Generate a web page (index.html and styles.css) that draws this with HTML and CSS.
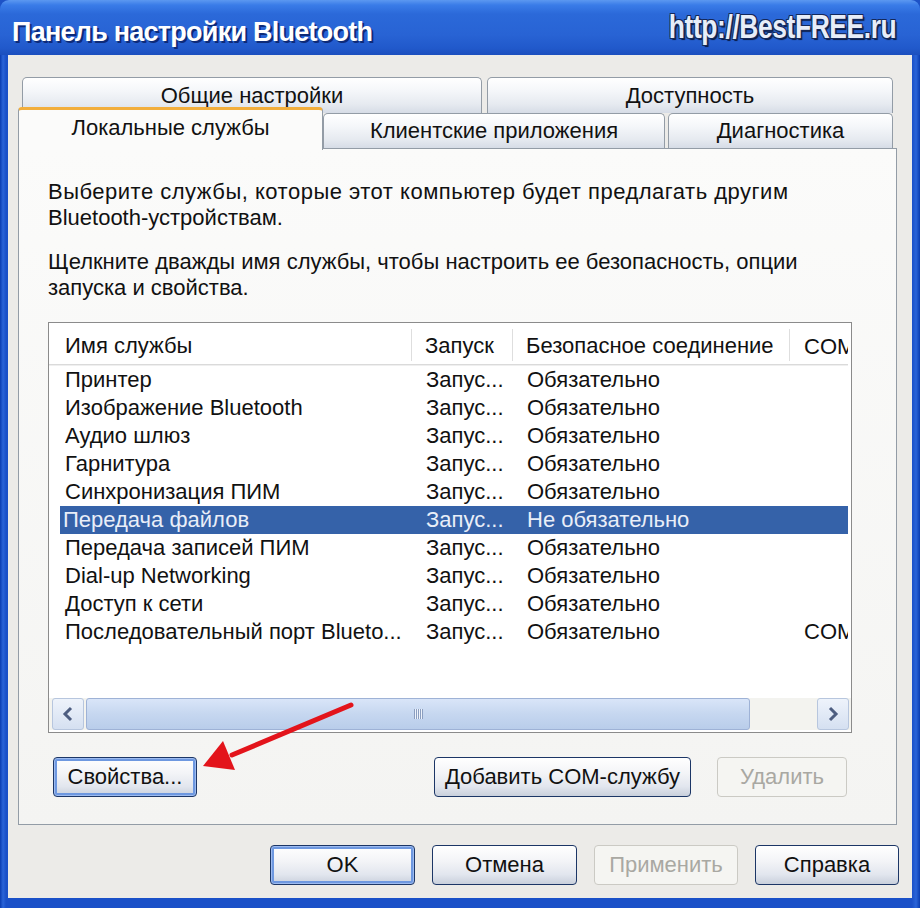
FILE: index.html
```html
<!DOCTYPE html>
<html lang="ru">
<head>
<meta charset="utf-8">
<title>Панель настройки Bluetooth</title>
<link rel="stylesheet" href="styles.css">
</head>
<body>
<div class="window">
  <div class="titlebar">
    <span class="title">Панель настройки Bluetooth</span>
    <span class="watermark">http://BestFREE.ru</span>
  </div>
  <div class="body">
    <div class="tabs row1">
      <div class="tab t-general">Общие настройки</div>
      <div class="tab t-access">Доступность</div>
    </div>
    <div class="tabs row2">
      <div class="tab active t-local">Локальные службы</div>
      <div class="tab t-client">Клиентские приложения</div>
      <div class="tab t-diag">Диагностика</div>
    </div>
    <div class="panel">
      <p class="para"><span class="wide">Выберите службы, которые этот компьютер будет предлагать другим</span><br>Bluetooth-устройствам.</p>
      <p class="para para2">Щелкните дважды имя службы, чтобы настроить ее безопасность, опции<br>запуска и свойства.</p>
      <div class="list">
        <div class="lv-head">
          <div class="hc c1">Имя службы</div>
          <div class="hc c2">Запуск</div>
          <div class="hc c3">Безопасное соединение</div>
          <div class="hc c4">COM</div>
        </div>
        <div class="lv-rows">
          <div class="lv-row"><span class="rc r1">Принтер</span><span class="rc r2">Запус...</span><span class="rc r3">Обязательно</span><span class="rc r4"></span></div>
          <div class="lv-row"><span class="rc r1">Изображение Bluetooth</span><span class="rc r2">Запус...</span><span class="rc r3">Обязательно</span><span class="rc r4"></span></div>
          <div class="lv-row"><span class="rc r1">Аудио шлюз</span><span class="rc r2">Запус...</span><span class="rc r3">Обязательно</span><span class="rc r4"></span></div>
          <div class="lv-row"><span class="rc r1">Гарнитура</span><span class="rc r2">Запус...</span><span class="rc r3">Обязательно</span><span class="rc r4"></span></div>
          <div class="lv-row"><span class="rc r1">Синхронизация ПИМ</span><span class="rc r2">Запус...</span><span class="rc r3">Обязательно</span><span class="rc r4"></span></div>
          <div class="lv-row selected"><span class="rc r1">Передача файлов</span><span class="rc r2">Запус...</span><span class="rc r3">Не обязательно</span><span class="rc r4"></span></div>
          <div class="lv-row"><span class="rc r1">Передача записей ПИМ</span><span class="rc r2">Запус...</span><span class="rc r3">Обязательно</span><span class="rc r4"></span></div>
          <div class="lv-row"><span class="rc r1">Dial-up Networking</span><span class="rc r2">Запус...</span><span class="rc r3">Обязательно</span><span class="rc r4"></span></div>
          <div class="lv-row"><span class="rc r1">Доступ к сети</span><span class="rc r2">Запус...</span><span class="rc r3">Обязательно</span><span class="rc r4"></span></div>
          <div class="lv-row"><span class="rc r1">Последовательный порт Blueto...</span><span class="rc r2">Запус...</span><span class="rc r3">Обязательно</span><span class="rc r4">COM</span></div>
        </div>
        <div class="hscroll">
          <div class="sbtn"><svg width="14" height="16" viewBox="0 0 14 16"><polyline points="10,2 4,8 10,14" fill="none" stroke="#4d5d80" stroke-width="3"/></svg></div>
          <div class="track">
            <div class="thumb"><span class="grip"></span></div>
          </div>
          <div class="sbtn"><svg width="14" height="16" viewBox="0 0 14 16"><polyline points="4,2 10,8 4,14" fill="none" stroke="#4d5d80" stroke-width="3"/></svg></div>
        </div>
      </div>
      <div class="btnrow">
        <button class="btn default w-props">Свойства...</button>
        <button class="btn w-add">Добавить COM-службу</button>
        <button class="btn disabled w-del">Удалить</button>
      </div>
    </div>
    <div class="footer">
      <button class="btn default w-ok">OK</button>
      <button class="btn w-cancel">Отмена</button>
      <button class="btn disabled w-apply">Применить</button>
      <button class="btn w-help">Справка</button>
    </div>
  </div>
  <svg class="arrow" width="920" height="908" viewBox="0 0 920 908">
    <line x1="351" y1="705" x2="232" y2="755" stroke="#e3141b" stroke-width="5" stroke-linecap="round"/>
    <polygon points="203,766 223,741 235,770" fill="#e3141b"/>
  </svg>
</div>
</body>
</html>
```
FILE: styles.css
```css
* { box-sizing: border-box; }
html, body { margin: 0; padding: 0; }
body {
  width: 920px;
  height: 908px;
  overflow: hidden;
  font-family: "Liberation Sans", Arial, sans-serif;
  font-size: 22px;
  color: #111;
  background: #1d52c6;
}
.window {
  position: relative;
  width: 920px;
  height: 908px;
  display: flex;
  flex-direction: column;
  border-radius: 9px 9px 0 0;
  overflow: hidden;
  background: linear-gradient(90deg, #0a3cb0 0, #2a64d8 3px, #1a50c8 6px, #1a50c8 912px, #2a64d8 916px, #0a3cb0 920px);
}
.titlebar {
  flex: none;
  height: 55px;
  display: flex;
  justify-content: space-between;
  align-items: flex-start;
  padding: 10px 24px 0 12px;
  background: linear-gradient(#5c98f0 0, #3a7ce8 5px, #2b69d9 14px, #2863d4 35px, #2159cb 48px, #1b4fbe 55px);
}
.title {
  color: #fff;
  font-weight: bold;
  font-size: 27px;
  letter-spacing: -0.75px;
  line-height: 44px;
  text-shadow: 2px 2px 0 #0d2a78;
}
.watermark {
  font-weight: bold;
  font-size: 33px;
  line-height: 1;
  color: #e7edf8;
  transform: scaleX(0.8);
  transform-origin: right center;
  letter-spacing: -0.5px;
  text-shadow: 1px 1px 0 #14285a, -1px -1px 0 #14285a, 1px -1px 0 #14285a, -1px 1px 0 #14285a, 2px 2px 1px #0b1a40;
}
.body {
  flex: 1;
  margin: 0 8px 10px 8px;
  background: #ecebe8;
  padding: 22px 13px 0 10px;
  display: flex;
  flex-direction: column;
}
.tabs { display: flex; }
.row1 { margin-left: 4px; height: 36px; gap: 5px; }
.row2 { height: 35px; align-items: flex-end; }
.tab {
  flex: none;
  display: flex;
  align-items: center;
  justify-content: center;
  border: 1px solid #939ca6;
  border-bottom: none;
  border-radius: 5px 5px 0 0;
  background: linear-gradient(#ffffff 0, #f5f7fa 35%, #e6eaf0 75%, #d6dce6 100%);
  white-space: nowrap;
}
.row1 .tab { height: 36px; }
.row2 .tab { height: 35px; }
.t-general { width: 460px; }
.t-access { width: 406px; }
.t-local { width: 305px; }
.t-client { width: 342px; }
.t-diag { width: 225px; margin-left: 3px; }
.tab.active {
  position: relative;
  z-index: 1;
  height: 43px;
  margin-bottom: -2px;
  margin-top: -8px;
  border-top: 3px solid #f2ae3c;
  border-radius: 4px 4px 0 0;
  background: #fbfbfa;
  padding-bottom: 4px;
}
.panel {
  width: 879px;
  height: 677px;
  border: 1px solid #939ca6;
  background: linear-gradient(#fbfbfa, #f4f4f2);
  padding: 30px 0 0 29px;
  display: flex;
  flex-direction: column;
}
.para {
  margin: 0;
  line-height: 26px;
  white-space: nowrap;
}
.wide { letter-spacing: 0.5px; }
.para2 { margin-top: 18px; }
.list {
  margin-top: 21px;
  width: 804px;
  height: 411px;
  border: 1px solid #8b8b8b;
  background: #fff;
  display: flex;
  flex-direction: column;
  overflow: hidden;
}
.lv-head {
  flex: none;
  display: flex;
  height: 42px;
  margin-right: 3px;
  overflow: hidden;
  border-bottom: 1px solid #dadada;
  box-shadow: 0 1px 0 #efefef;
  white-space: nowrap;
}
.hc {
  flex: none;
  display: flex;
  align-items: center;
  padding-top: 6px;
}
.hc.c1 { width: 363px; padding-left: 16px; }
.hc.c2 { width: 101px; padding-left: 13px; }
.hc.c3 { width: 277px; padding-left: 13px; }
.hc.c4 { width: 120px; padding-left: 14px; }
.hc.c1, .hc.c2, .hc.c3 { border-right: 1px solid #dedede; margin: 6px 0 3px; padding-top: 2px; }
.lv-rows { padding-top: 1px; }
.lv-row {
  display: flex;
  height: 28px;
  line-height: 28px;
  margin-left: 11px;
  margin-right: 3px;
  overflow: hidden;
  white-space: nowrap;
}
.rc { display: block; flex: none; overflow: hidden; }
.r1 { width: 352px; padding-left: 5px; }
.r2 { width: 101px; padding-left: 14px; }
.r3 { width: 277px; padding-left: 14px; }
.r4 { width: 80px; padding-left: 14px; }
.lv-row.selected { background: #3562a9; color: #e9eef8; }
.lv-row.selected .r1 { padding-left: 3px; }
.hscroll {
  margin-top: auto;
  margin-bottom: 2px;
  height: 32px;
  display: flex;
  align-items: stretch;
  padding: 0 2px 0 3px;
  gap: 2px;
  background: #f3f3ef;
}
.sbtn {
  width: 32px;
  display: flex;
  align-items: center;
  justify-content: center;
  border: 1px solid #b7c6de;
  border-radius: 3px;
  background: linear-gradient(#eef3fb, #d5e0f1);
}
.track { flex: 1; display: flex; }
.thumb {
  width: 664px;
  border: 1px solid #9eb2d6;
  border-radius: 3px;
  background: linear-gradient(#d9e5f8, #c6d7f0 50%, #b9cdea);
  display: flex;
  align-items: center;
  justify-content: center;
}
.grip {
  width: 9px;
  height: 10px;
  background: repeating-linear-gradient(90deg, #8b9ec0 0 1px, #eef3fb 1px 2px);
}
.btnrow {
  display: flex;
  margin-top: 24px;
  margin-left: 5px;
  width: 794px;
}
.btn {
  font-family: "Liberation Sans", Arial, sans-serif;
  font-size: 22px;
  color: #111;
  height: 40px;
  padding: 0;
  border: 1px solid #1c3666;
  border-radius: 4px;
  background: linear-gradient(#ffffff 0, #f3f4f7 40%, #e2e6ee 75%, #c9d0dc 100%);
}
.btn.default {
  box-shadow: inset 0 0 0 1px #9dbbf0, inset 0 0 0 3px #6e98e0;
}
.btn.disabled {
  color: #a9a8a2;
  border-color: #cbcac4;
  background: #f5f5f2;
}
.w-props { width: 144px; }
.w-add { width: 257px; margin-left: auto; }
.w-del { width: 130px; margin-left: 26px; }
.footer {
  display: flex;
  justify-content: flex-end;
  gap: 17px;
  margin-top: 20px;
}
.w-ok, .w-cancel { width: 145px; }
.w-apply, .w-help { width: 144px; }
.arrow {
  position: absolute;
  left: 0;
  top: 0;
  pointer-events: none;
}
```
